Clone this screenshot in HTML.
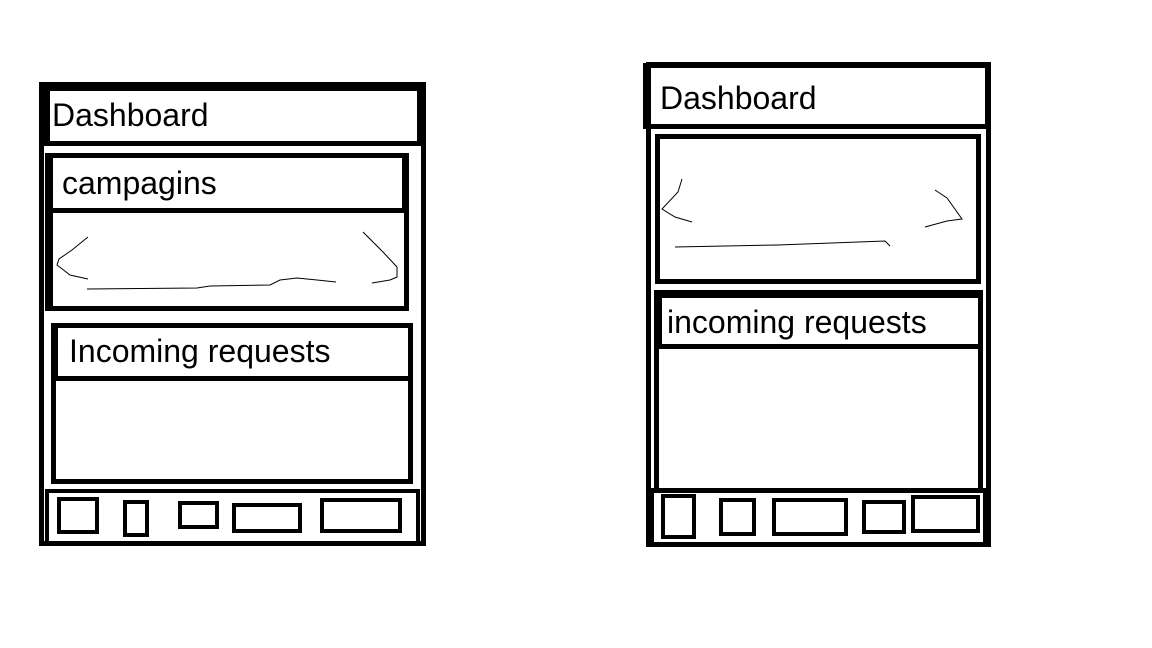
<!DOCTYPE html>
<html><head><meta charset="utf-8"><style>
html,body{margin:0;padding:0;background:#fff;width:1152px;height:648px;overflow:hidden;position:relative}
.b{position:absolute;box-sizing:border-box;border:solid #000}
.t{position:absolute;font-family:"Liberation Sans",sans-serif;font-size:32px;color:#000;line-height:1;white-space:nowrap}
</style></head><body>
<!-- LEFT -->
<div class="b" style="left:39px;top:82px;width:387px;height:464px;border-width:5px"></div>
<div class="b" style="left:44px;top:87px;width:377px;height:59px;border-width:4px 4px 5px 6px"></div>
<div class="t" style="left:52px;top:99px">Dashboard</div>
<div class="b" style="left:45px;top:153px;width:364px;height:158px;border-width:5px 5px 5px 8px"></div>
<div class="b" style="left:45px;top:153px;width:362px;height:60px;border-width:5px 5px 5px 8px"></div>
<div class="t" style="left:62px;top:167px">campagins</div>
<div class="b" style="left:51px;top:323px;width:362px;height:161px;border-width:5px"></div>
<div class="b" style="left:53px;top:323px;width:359px;height:58px;border-width:5px 4px 5px 5px"></div>
<div class="t" style="left:69px;top:335px">Incoming requests</div>
<div class="b" style="left:45px;top:489px;width:375px;height:56px;border-width:4px 4px 0 4px"></div>
<div class="b" style="left:57px;top:497px;width:42px;height:37px;border-width:4px"></div>
<div class="b" style="left:123px;top:500px;width:26px;height:37px;border-width:4px"></div>
<div class="b" style="left:178px;top:501px;width:41px;height:28px;border-width:4px"></div>
<div class="b" style="left:232px;top:503px;width:70px;height:30px;border-width:4px"></div>
<div class="b" style="left:320px;top:498px;width:82px;height:35px;border-width:4px"></div>
<!-- RIGHT -->
<div class="b" style="left:646px;top:62px;width:345px;height:485px;border-width:5px"></div>
<div class="b" style="left:643px;top:63px;width:346px;height:66px;border-width:5px 4px 5px 7px"></div>
<div class="t" style="left:660px;top:82px">Dashboard</div>
<div class="b" style="left:655px;top:134px;width:326px;height:150px;border-width:5px"></div>
<div class="b" style="left:654px;top:290px;width:329px;height:202px;border-width:8px 5px 4px 5px"></div>
<div class="b" style="left:654px;top:290px;width:329px;height:59px;border-width:8px 4px 5px 8px"></div>
<div class="t" style="left:667px;top:306px">incoming requests</div>
<div class="b" style="left:650px;top:488px;width:337px;height:55px;border-width:5px 4px 0 4px"></div>
<div class="b" style="left:661px;top:494px;width:35px;height:45px;border-width:4px"></div>
<div class="b" style="left:719px;top:498px;width:37px;height:38px;border-width:4px"></div>
<div class="b" style="left:772px;top:498px;width:76px;height:38px;border-width:4px"></div>
<div class="b" style="left:862px;top:500px;width:44px;height:34px;border-width:4px"></div>
<div class="b" style="left:911px;top:495px;width:69px;height:38px;border-width:4px"></div>
<svg width="1152" height="648" style="position:absolute;left:0;top:0" fill="none" stroke="#000" stroke-width="1">
<polyline points="88,237 72,250 59,259 57,265 70,275 88,279"/>
<polyline points="87,289 197,288 210,286 270,285 280,280 297,278 317,280 336,282"/>
<polyline points="363,232 383,252 397,267 397,277 390,280 372,283"/>
<polyline points="682,179 678,192 662,209 675,217 692,222"/>
<polyline points="675,247 778,245 885,241 890,246"/>
<polyline points="935,190 947,198 962,219 947,221 925,227"/>
</svg>
</body></html>
